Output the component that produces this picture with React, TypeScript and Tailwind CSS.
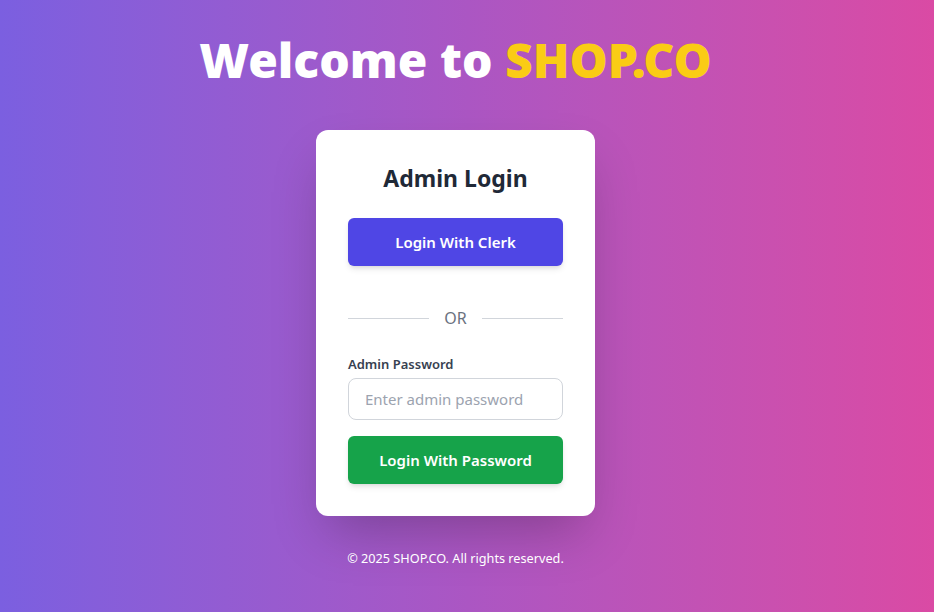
export default function App() {
  return (
    <div
      className="min-h-[612px] w-full bg-gradient-to-r from-[#7b5fe0] via-[#ab56c3] to-[#da4aa4] flex flex-col items-center pt-[36px] pb-10 pr-[23px]"
      style={{ fontFamily: '"Noto Sans", "Open Sans", sans-serif' }}
    >
      <h1 className="text-[48px] leading-none font-black text-white">
        Welcome to <span className="text-[#facc15]">SHOP.CO</span>
      </h1>

      <div className="mt-[46px] w-[279px] bg-white rounded-xl shadow-2xl px-8 pt-8 pb-8">
        <h2 className="text-[23px] leading-8 font-bold text-[#1f2937] text-center">Admin Login</h2>

        <button className="mt-6 w-full bg-[#4f46e5] text-white font-semibold text-[15px] leading-6 py-3 rounded-md shadow-md">
          Login With Clerk
        </button>

        <div className="mt-10 mb-6 flex items-center">
          <div className="flex-1 h-px bg-[#d1d5db]" />
          <span className="px-[15px] text-base leading-6 text-[#6b7280]">OR</span>
          <div className="flex-1 h-px bg-[#d1d5db]" />
        </div>

        <label className="block text-[13px] leading-5 font-semibold text-[#374151] mb-1">Admin Password</label>
        <input
          type="password"
          placeholder="Enter admin password"
          className="w-full border border-[#d1d5db] rounded-lg px-4 py-2 text-[15px] leading-6 placeholder-[#9ca3af] outline-none"
        />

        <button className="mt-4 w-full bg-[#16a34a] text-white font-semibold text-[15px] leading-6 py-3 rounded-md shadow-md">
          Login With Password
        </button>
      </div>

      <p className="mt-8 text-[12.7px] leading-5 text-white">© 2025 SHOP.CO. All rights reserved.</p>
    </div>
  )
}
